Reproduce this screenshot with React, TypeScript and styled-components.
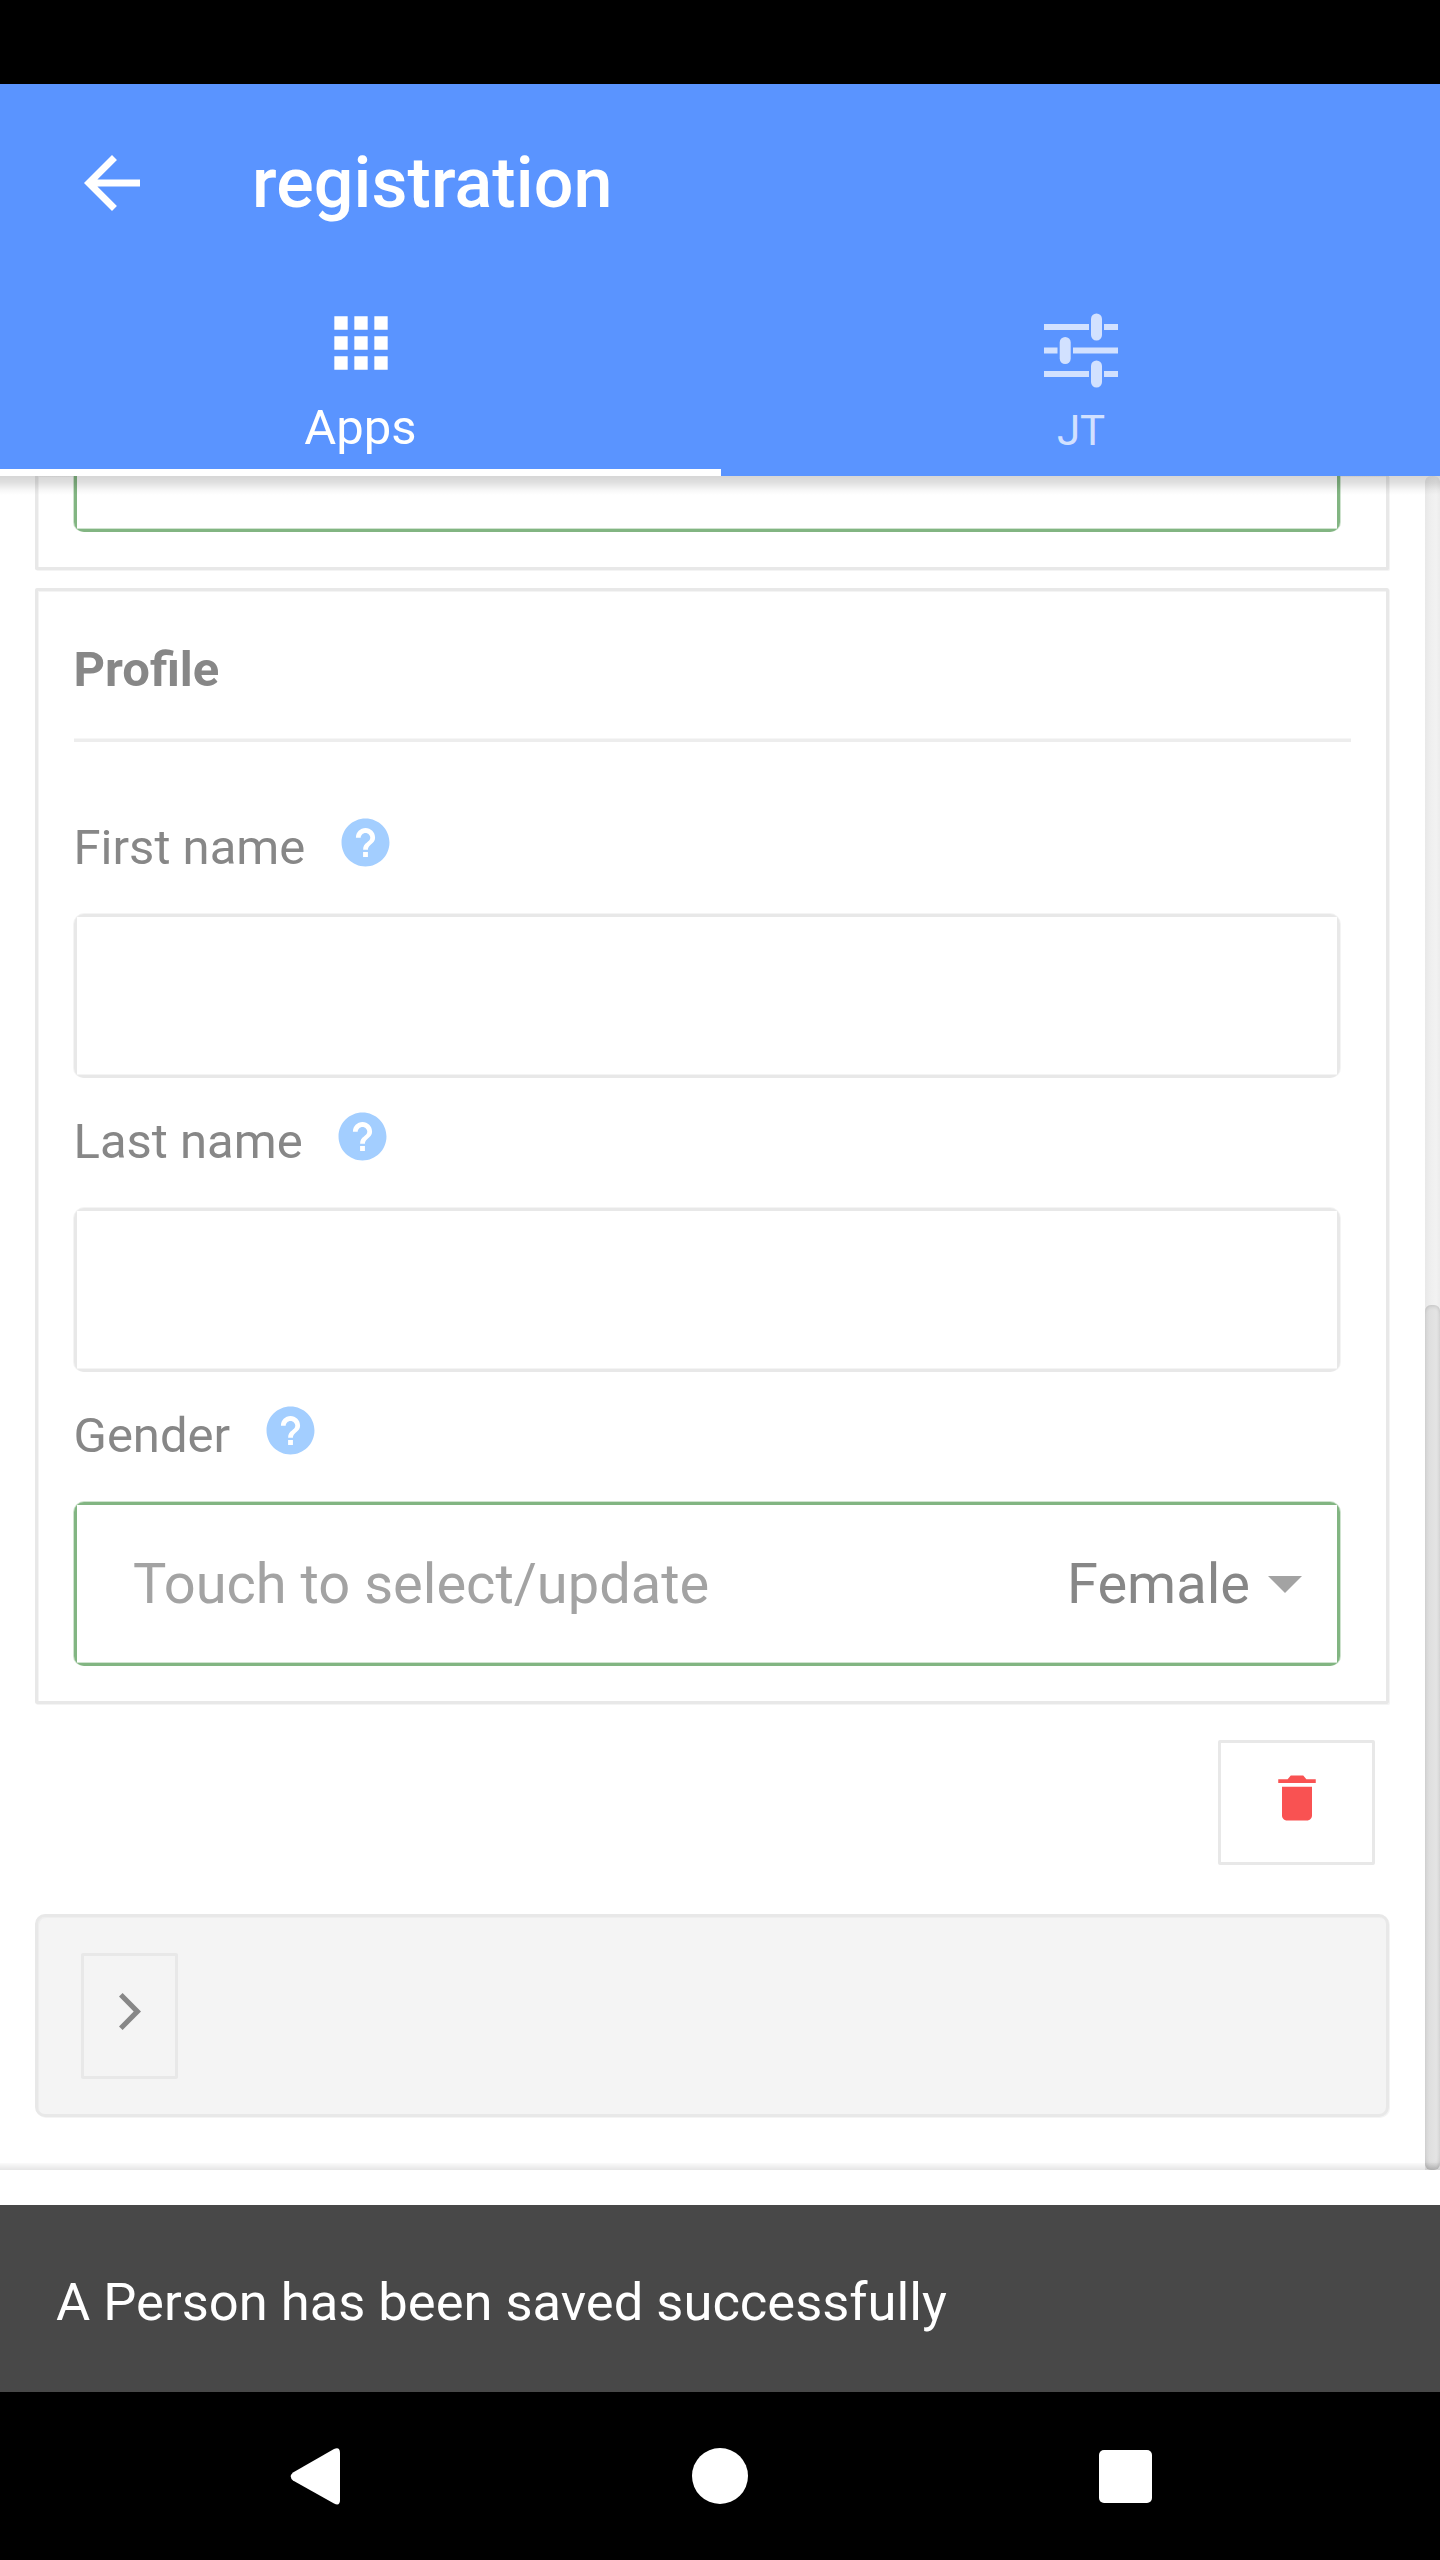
import React from 'react';
import styled, { createGlobalStyle } from 'styled-components';
import { IoMdHelpCircle, IoMdTrash } from 'react-icons/io';
import { MdApps, MdArrowBack } from 'react-icons/md';

const GlobalStyle = createGlobalStyle`
  * { box-sizing: border-box; }
  body { margin: 0; background: #000; }
  svg { display: block; flex: none; }
`;

const line = '#e8e8e8';
const softLine = '#f4f4f4';
const paper = '#fff';

const Screen = styled.div`
  display: flex;
  flex-direction: column;
  width: 1440px;
  height: 2560px;
  overflow: hidden;
  background: ${paper};
  font-family: Roboto, 'Liberation Sans', sans-serif;
`;

const StatusBar = styled.div`
  flex: none;
  height: 84px;
  background: #000;
`;

const AppBar = styled.header`
  flex: none;
  display: flex;
  flex-direction: column;
  height: 392px;
  background: #5a94ff;
  color: #fff;
`;

const TitleRow = styled.div`
  display: flex;
  align-items: center;
  height: 197px;
  padding-left: 70px;
`;

const Title = styled.h1`
  margin: 0 0 0 98px;
  font-size: 70px;
  font-weight: 500;
  letter-spacing: 0.08px;
  line-height: 82px;
`;

const Tabs = styled.nav`
  flex: 1;
  display: grid;
  grid-template-columns: 721px 720px;
`;

const Tab = styled.div<{ $active?: boolean; $size: number; $lead: number }>`
  display: flex;
  flex-direction: column;
  align-items: center;
  padding-top: ${(p) => p.$lead}px;
  border-bottom: 7px solid ${(p) => (p.$active ? '#fff' : 'transparent')};
  color: ${(p) => (p.$active ? '#fff' : '#d2e1ff')};
  font-size: ${(p) => p.$size}px;
`;

const TabLabel = styled.span<{ $gap: number }>`
  margin-top: ${(p) => p.$gap}px;
  line-height: 58px;
`;

const Viewport = styled.main`
  position: relative;
  flex: none;
  display: flex;
  height: 1694px;
  overflow: hidden;
`;

const TopShade = styled.div`
  position: absolute;
  inset: 0 0 auto 0;
  height: 19px;
  background: linear-gradient(rgba(0, 0, 0, 0.16), rgba(0, 0, 0, 0.12) 35%, rgba(0, 0, 0, 0.03) 75%, transparent);
`;

const BottomShade = styled.div`
  position: absolute;
  inset: auto 0 0 0;
  height: 7px;
  background: linear-gradient(rgba(0, 0, 0, 0.02), rgba(0, 0, 0, 0.1));
`;

const Form = styled.div`
  display: flex;
  flex-direction: column;
  width: 1425px;
  padding: 0 36px 0 35px;
`;

const Card = styled.section<{ $cut?: boolean }>`
  flex: none;
  margin-bottom: ${(p) => (p.$cut ? 18 : 36)}px;
  padding: 0 46px 35px 36px;
  border: 3px solid ${line};
  border-top-width: ${(p) => (p.$cut ? 0 : 3)}px;
  border-radius: ${(p) => (p.$cut ? '0 0 2px 2px' : '2px')};
  box-shadow: inset 1px 1px ${softLine}, 1px 1px ${softLine};
`;

const CardTitle = styled.h2`
  display: flex;
  align-items: flex-end;
  width: 1277px;
  height: 151px;
  margin: 0;
  padding-bottom: 40px;
  border-bottom: 3px solid #ededed;
  box-shadow: inset 0 -1px #f6f6f6;
  color: #878787;
  font-size: 49px;
  font-weight: 700;
  line-height: 58px;
  text-indent: -0.5px;
`;

const LabelRow = styled.div<{ $first?: boolean }>`
  display: flex;
  align-items: flex-end;
  height: ${(p) => (p.$first ? 172 : 130)}px;
  margin-left: -0.5px;
  padding-bottom: 37px;
  color: #878787;
  font-size: 49px;
  line-height: 58px;
`;

const Help = styled(IoMdHelpCircle)`
  width: 59px;
  height: 59px;
  margin: 0 0 5.5px 30.5px;
  color: #a3ceff;
`;

const Field = styled.div<{ $valid?: boolean; $cut?: boolean }>`
  display: flex;
  width: 1266px;
  height: ${(p) => (p.$cut ? 56 : 164)}px;
  padding: ${(p) => (p.$cut ? 0 : 3)}px 3px 3px;
  border-radius: ${(p) => (p.$cut ? '0 0 10px 10px' : '10px')};
  background: ${(p) => (p.$valid ? '#82b582' : line)};
  box-shadow: -1px 0 ${(p) => (p.$valid ? '#cfe3cf' : softLine)}, 1px 0 ${(p) => (p.$valid ? '#cfe3cf' : softLine)},
    0 ${(p) => (p.$cut ? 0 : -1)}px ${(p) => (p.$valid ? '#cfe3cf' : softLine)};
`;

const FieldBody = styled.div<{ $valid?: boolean }>`
  flex: 1;
  display: flex;
  align-items: center;
  padding: 0 35px 0 56px;
  border-bottom: 1px solid ${(p) => (p.$valid ? '#cfe3cf' : softLine)};
  background: ${paper};
  color: #878787;
  font-size: 56px;
  line-height: 66px;
`;

const Placeholder = styled.span`
  flex: 1;
  color: #a3a3a3;
`;

const Caret = styled.i`
  margin: 1px 0 0 18px;
  border: 17.5px solid transparent;
  border-top-color: #a3a3a3;
  border-bottom: 0;
`;

const IconButton = styled.button<{ $width: number; $height: number }>`
  display: flex;
  justify-content: center;
  width: ${(p) => p.$width}px;
  height: ${(p) => p.$height}px;
  padding: 25px 0 0;
  border: 3px solid ${line};
  border-radius: 2px;
  background: none;
  color: #f95252;
`;

const Actions = styled.div`
  display: flex;
  justify-content: flex-end;
  height: 125px;
  padding-right: 14px;
`;

const Footer = styled.div`
  height: 203px;
  margin-top: 49px;
  padding: 36px 43px;
  border: 3px solid ${line};
  border-radius: 10px;
  background: #f4f4f4;
  box-shadow: inset 1px 1px #eee, 1px 1px ${softLine};
`;

const Track = styled.div`
  display: flex;
  flex-direction: column;
  justify-content: flex-end;
  width: 15px;
  border-radius: 6px 6px 0 0;
  background: linear-gradient(90deg, #e8e8e8, #efefef 40%, #f2f2f2 75%, #ececec);
`;

const Thumb = styled.div`
  height: 865px;
  border-radius: 6px;
  background: linear-gradient(90deg, #d3d3d3, #dfdfdf 30%, #e4e4e4 75%, #d8d8d8);
  box-shadow: inset 0 4px 4px -3px rgba(0, 0, 0, 0.14), inset 0 -7px 6px -4px rgba(0, 0, 0, 0.16);
`;

const Toast = styled.div`
  flex: none;
  display: flex;
  align-items: center;
  height: 187px;
  margin-top: 35px;
  padding: 7px 56px 0;
  background: #484848;
  color: #fff;
  font-size: 52.5px;
  line-height: 62px;
`;

const NavBar = styled.footer`
  flex: 1;
  display: flex;
  align-items: flex-start;
  padding: 55.5px 288px 0 290px;
  justify-content: space-between;
  background: #000;
`;

const HomeKey = styled.div`
  width: 56px;
  height: 56px;
  border-radius: 50%;
  background: #fff;
`;

const RecentKey = styled.div`
  width: 53px;
  height: 53px;
  margin-top: 2.5px;
  border-radius: 5px;
  background: #fff;
`;

const OptionsIcon = () => (
  <svg width="74" height="75" viewBox="0 0 74 75" fill="currentColor">
    <path d="M0 11h45v6H0zM60 11h14v6H60zM0 34.5h13.5v6H0zM29 34.5h45v6H29zM0 58h45v6H0zM60 58h14v6H60z" />
    <rect x="47" y="0.5" width="11" height="27" rx="5.5" />
    <rect x="15.7" y="24" width="11" height="27" rx="5.5" />
    <rect x="47" y="47.5" width="11" height="27" rx="5.5" />
  </svg>
);

const Chevron = () => (
  <svg width="22" height="37" viewBox="0 0 22 37" fill="#878787">
    <path d="M0 33.4 14.7 18.5 0 3.6 3.6 0 22 18.5 3.6 37z" />
  </svg>
);

const ChevronSlot = styled.span`
  margin-top: 11.5px;
`;

const BackKey = () => (
  <svg width="50" height="57" viewBox="0 0 50 57" fill="#fff">
    <path d="M44 1Q50-1.500 50 5V52Q50 58.500 44 55.500L3 32.500Q-1.500 28.500 3 24.500z" />
  </svg>
);

const fields = [{ label: 'First name' }, { label: 'Last name' }];

export default function App() {
  return (
    <Screen>
      <GlobalStyle />
      <StatusBar />
      <AppBar>
        <TitleRow>
          <MdArrowBack size={84} />
          <Title>registration</Title>
        </TitleRow>
        <Tabs>
          <Tab $active $size={49} $lead={22}>
            <MdApps size={80} />
            <TabLabel $gap={16}>Apps</TabLabel>
          </Tab>
          <Tab $size={42} $lead={32}>
            <OptionsIcon />
            <TabLabel $gap={14}>JT</TabLabel>
          </Tab>
        </Tabs>
      </AppBar>
      <Viewport>
        <Form>
          <Card $cut>
            <Field $valid $cut>
              <FieldBody $valid />
            </Field>
          </Card>
          <Card>
            <CardTitle>Profile</CardTitle>
            {fields.map((f, i) => (
              <React.Fragment key={f.label}>
                <LabelRow $first={i === 0}>
                  {f.label}
                  <Help />
                </LabelRow>
                <Field>
                  <FieldBody />
                </Field>
              </React.Fragment>
            ))}
            <LabelRow>
              Gender
              <Help />
            </LabelRow>
            <Field $valid>
              <FieldBody $valid>
                <Placeholder>Touch to select/update</Placeholder>
                Female
                <Caret />
              </FieldBody>
            </Field>
          </Card>
          <Actions>
            <IconButton $width={157} $height={125}>
              <IoMdTrash size={60} />
            </IconButton>
          </Actions>
          <Footer>
            <IconButton $width={97} $height={126}>
              <ChevronSlot>
                <Chevron />
              </ChevronSlot>
            </IconButton>
          </Footer>
        </Form>
        <Track>
          <Thumb />
        </Track>
        <TopShade />
        <BottomShade />
      </Viewport>
      <Toast>A Person has been saved successfully</Toast>
      <NavBar>
        <BackKey />
        <HomeKey />
        <RecentKey />
      </NavBar>
    </Screen>
  );
}
